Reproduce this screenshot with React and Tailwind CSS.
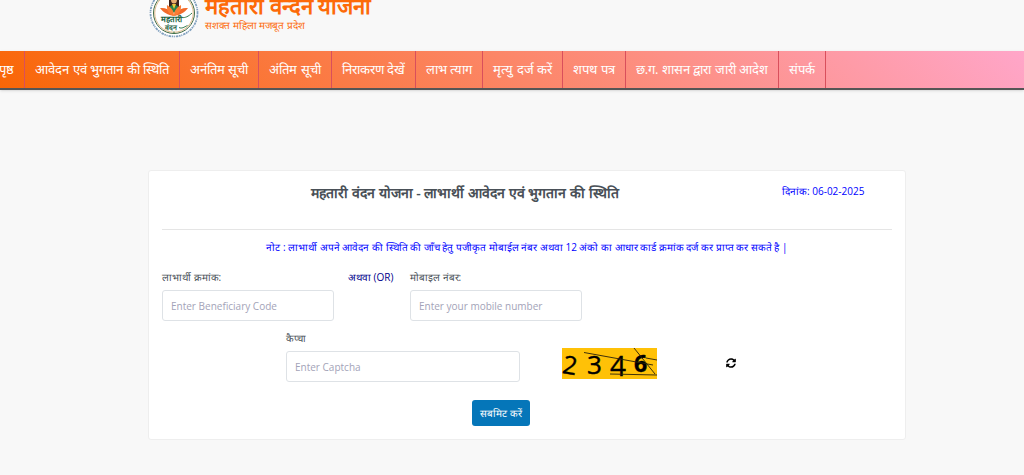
import { useState } from "react";
import { FaSyncAlt } from "react-icons/fa";

const NAV_ITEMS = [
  "मुख्य पृष्ठ",
  "आवेदन एवं भुगतान की स्थिति",
  "अनंतिम सूची",
  "अंतिम सूची",
  "निराकरण देखें",
  "लाभ त्याग",
  "मृत्यु दर्ज करें",
  "शपथ पत्र",
  "छ.ग. शासन द्वारा जारी आदेश",
  "संपर्क",
];

const inputClass =
  "block w-full h-[31px] rounded-[3px] border border-[#dee2e6] bg-white px-2 text-[10px] text-[#495057] placeholder:text-[#a3a3b8] outline-none focus:border-blue-400";

function Logo() {
  return (
    <svg viewBox="0 0 100 100" className="size-[50px] shrink-0" role="img" aria-label="महतारी वंदन">
      <circle cx="50" cy="50" r="46" fill="#fff" />
      <circle cx="50" cy="50" r="47" fill="none" stroke="#7f9fbe" strokeWidth="3.5" strokeDasharray="3 1.5 5 2 2 1.5" />
      <circle cx="50" cy="50" r="41" fill="#fff" stroke="#3f6b45" strokeWidth="2" />
      <circle cx="50" cy="50" r="38.5" fill="none" stroke="#d7a468" strokeWidth="1.5" />
      <path d="M40 42V24c0-14 20-14 20 0v18z" fill="#3b211b" />
      <ellipse cx="50" cy="23" rx="6" ry="8" fill="#e8ad72" />
      <path d="M39 43c0-12 22-12 22 0v6H39z" fill="#29834b" />
      <path d="M46 32h8l-4 10z" fill="#f1c93b" />
      <path d="M50 56C38 54 28 49 22 40c10-1 18 2 24 9zM50 56c12-2 22-7 28-16-10-1-18 2-24 9z" fill="#f26a2a" />
      <path d="M50 56C39 52 35 44 36 34c9 5 14 11 14 22zM50 56c11-4 15-12 14-22-9 5-14 11-14 22z" fill="#fb7d35" />
      <text x="45" y="67" textAnchor="middle" fontSize="16" fontWeight="700" fill="#20603e">महतारी</text>
      <text x="43" y="84" textAnchor="middle" fontSize="14" fontWeight="700" fill="#20603e">वंदन</text>
      <path d="M60 79c6 3 10-1 17-4M50 87v5M66 59c6 1 13-2 20-9" fill="none" stroke="#347b4d" strokeWidth="2" />
    </svg>
  );
}

function Captcha() {
  return (
    <svg viewBox="0 0 95 31" className="h-[31px] w-[95px]" role="img" aria-label="2346">
      <rect width="95" height="31" fill="#ffc107" />
      <g fontFamily="Open Sans, sans-serif" fontSize="26" fill="#000" stroke="#000" strokeWidth="0.4">
        <text x="1" y="26" fontSize="25" transform="rotate(10 7 17)">2</text>
        <text x="25" y="26">3</text>
        <text x="48" y="28" fontSize="28">4</text>
        <text x="72" y="24" fontSize="23" fontWeight="700">6</text>
      </g>
      <path d="M22 4.5 91 17M72 0 93 26M48 26 95 27M84 10 95 12" fill="none" stroke="#29200a" strokeWidth="0.9" />
    </svg>
  );
}

function Header() {
  return (
    <header className="h-[51px] overflow-hidden">
      <div className="-mt-3 ml-[149px] flex gap-[6px] text-[#fd6a08]">
        <Logo />
        <div className="pt-1">
          <h1 className="text-[22px] leading-[26px] font-bold">महतारी वन्दन योजना</h1>
          <p className="text-[10px] leading-[14px]">सशक्त महिला मजबूत प्रदेश</p>
        </div>
      </div>
    </header>
  );
}

function NavBar() {
  return (
    <nav className="overflow-hidden border-b-2 border-[#555] bg-linear-[45deg,#f96606,#ffa6c9] shadow-sm">
      <ul className="-ml-[37px] flex h-[37px]">
        {NAV_ITEMS.map((item) => (
          <li key={item} className="shrink-0 border-r border-[#d94f5c]">
            <a href="#" className="flex h-full items-center px-[10px] text-[13px] font-medium whitespace-nowrap text-white">
              {item}
            </a>
          </li>
        ))}
      </ul>
    </nav>
  );
}

function StatusForm() {
  const [form, setForm] = useState({ code: "", mobile: "", captcha: "" });
  const update = (e) => setForm({ ...form, [e.target.name]: e.target.value });

  return (
    <form
      onSubmit={(e) => e.preventDefault()}
      className="rounded-[3px] border border-[#eeeeee] bg-white px-[6px] pb-[13px] text-[10px] text-[#495057]"
    >
      <div className="grid grid-cols-12 pt-3">
        <h2 className="col-span-10 text-center text-[14px] leading-5 font-semibold">
          महतारी वंदन योजना - लाभार्थी आवेदन एवं भुगतान की स्थिति
        </h2>
        <p className="col-span-2 px-[7px] leading-4 text-[#0000ff]">दिनांक: 06-02-2025</p>
      </div>
      <hr className="mx-[7px] mt-[26px] border-[#e5e5e5]" />
      <p className="mt-[9px] text-center leading-4 text-[#0000ff]">
        नोट : लाभार्थी अपने आवेदन की स्थिति की जाँच हेतु पजीकृत मोबाईल नंबर अथवा 12 अंको का आधार कार्ड क्रमांक दर्ज कर प्राप्त कर सकते है |
      </p>
      <div className="mt-[14px] grid grid-cols-12">
        <div className="col-span-3 px-[7px]">
          <label htmlFor="code" className="mb-[5px] block leading-4">लाभार्थी क्रमांक:</label>
          <input id="code" name="code" value={form.code} onChange={update} placeholder="Enter Beneficiary Code" className={inputClass} />
        </div>
        <p className="col-span-1 pl-[7px] leading-4 whitespace-nowrap text-[#00008b]">अथवा (OR)</p>
        <div className="col-span-3 px-[7px]">
          <label htmlFor="mobile" className="mb-[5px] block leading-4">मोबाइल नंबर:</label>
          <input id="mobile" name="mobile" value={form.mobile} onChange={update} placeholder="Enter your mobile number" className={inputClass} />
        </div>
      </div>
      <div className="mt-[9px] grid grid-cols-12 items-end">
        <div className="col-span-4 col-start-3 px-[7px]">
          <label htmlFor="captcha" className="mb-[5px] block leading-4">कैप्चा</label>
          <input id="captcha" name="captcha" value={form.captcha} onChange={update} placeholder="Enter Captcha" className={inputClass} />
        </div>
        <div className="col-span-3 pb-[3px] pl-[35px]">
          <Captcha />
        </div>
        <div className="col-span-1 pb-[14px] pl-[13px]">
          <button type="button" aria-label="Refresh" className="block text-black">
            <FaSyncAlt size={10} />
          </button>
        </div>
      </div>
      <div className="mt-[18px] grid grid-cols-12">
        <div className="col-start-6 pl-[7px]">
          <button type="submit" className="h-[26px] rounded-[3px] bg-[#0576b9] px-2 font-medium whitespace-nowrap text-white">
            सबमिट करें
          </button>
        </div>
      </div>
    </form>
  );
}

export default function App() {
  return (
    <div className="min-h-screen bg-[#f8f8f8] font-['Open_Sans',sans-serif]">
      <Header />
      <NavBar />
      <main className="mt-20 mr-[118px] ml-[148px]">
        <StatusForm />
      </main>
    </div>
  );
}
